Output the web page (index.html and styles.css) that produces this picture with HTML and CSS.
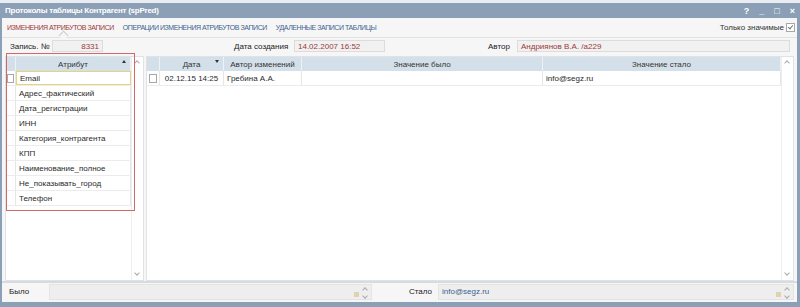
FILE: index.html
```html
<!DOCTYPE html>
<html>
<head>
  <meta charset="UTF-8">
  <title>Протоколы таблицы Контрагент</title>
  <link rel="stylesheet" href="styles.css">
</head>
<body>
  <div class="window">
    <div class="titlebar">
      <span class="title">Протоколы таблицы Контрагент (spPred)</span>
      <span class="controls"><span>?</span><span>_</span><span>&#9633;</span><span>&#215;</span></span>
    </div>
    <div class="tabs">
      <span class="tab active">Изменения атрибутов записи</span>
      <span class="tab">Операции изменения атрибутов записи</span>
      <span class="tab">Удаленные записи таблицы</span>
      <label class="only">Только значимые <span class="check on"></span></label>
    </div>
    <div class="fields">
      <span class="lbl l1">Запись. №</span>
      <span class="box num">8331</span>
      <span class="lbl l2">Дата создания</span>
      <span class="box date">14.02.2007 16:52</span>
      <span class="lbl l3">Автор</span>
      <span class="box author">Андриянов В.А. /a229</span>
    </div>
    <div class="main">
      <div class="panel left">
        <div class="grid">
          <div class="row head">
            <div class="c chk"></div>
            <div class="c attr">Атрибут<span class="sort"></span></div>
          </div>
          <div class="row sel"><div class="c chk"><span class="check"></span></div><div class="c attr">Email</div></div>
          <div class="row"><div class="c chk"></div><div class="c attr">Адрес_фактический</div></div>
          <div class="row"><div class="c chk"></div><div class="c attr">Дата_регистрации</div></div>
          <div class="row"><div class="c chk"></div><div class="c attr">ИНН</div></div>
          <div class="row"><div class="c chk"></div><div class="c attr">Категория_контрагента</div></div>
          <div class="row"><div class="c chk"></div><div class="c attr">КПП</div></div>
          <div class="row"><div class="c chk"></div><div class="c attr">Наименование_полное</div></div>
          <div class="row"><div class="c chk"></div><div class="c attr">Не_показывать_город</div></div>
          <div class="row"><div class="c chk"></div><div class="c attr">Телефон</div></div>
        </div>
        <div class="scroll"><span class="up"></span><span class="down"></span></div>
        <div class="mark"></div>
      </div>
      <div class="panel right">
        <div class="grid">
          <div class="row head">
            <div class="c chk2"></div>
            <div class="c date">Дата<span class="sort"></span></div>
            <div class="c who">Автор изменений</div>
            <div class="c was">Значение было</div>
            <div class="c now">Значение стало</div>
          </div>
          <div class="row">
            <div class="c chk2"><span class="check"></span></div>
            <div class="c date">02.12.15 14:25</div>
            <div class="c who al">Гребина А.А.</div>
            <div class="c was"></div>
            <div class="c now al">info@segz.ru</div>
          </div>
        </div>
        <div class="scroll"><span class="up"></span><span class="down"></span></div>
      </div>
    </div>
    <div class="bottom">
      <span class="blbl b1">Было</span>
      <div class="area a1"><span class="grip"></span><span class="arrows"><i class="up"></i><i class="down"></i></span></div>
      <span class="blbl b2">Стало</span>
      <div class="area a2"><span class="val">info@segz.ru</span><span class="grip"></span><span class="arrows"><i class="up"></i><i class="down"></i></span></div>
    </div>
  </div>
</body>
</html>
```

FILE: styles.css
```css
html, body { margin: 0; height: 307px; overflow: hidden; }
body { background: #e9edf1; font-family: "Liberation Sans", Arial, sans-serif; font-size: 8px; color: #2a2a2a; padding-top: 3px; box-sizing: border-box; }

.window { height: 304px; background: #8b9fb6; padding: 0 3px 5px 2px; box-sizing: border-box; display: flex; flex-direction: column; }
.titlebar { height: 15px; display: flex; align-items: center; justify-content: space-between; color: #fff; padding-left: 3px; }
.title { font-weight: bold; font-size: 8px; letter-spacing: -0.25px; }
.controls { display: flex; gap: 10px; font-size: 9px; font-weight: bold; padding-right: 2px; }

.tabs, .fields, .main, .bottom { background: #f6f6f6; }
.tabs { height: 19px; display: flex; align-items: center; padding-left: 5px; position: relative; }
.tab { text-transform: uppercase; font-size: 7px; color: #3c5f8f; margin-right: 9px; letter-spacing: -0.45px; position: relative; }
.tab.active { color: #9c3b3b; }
.tab.active::after { content: ""; position: absolute; left: 50%; bottom: -8px; width: 6px; height: 6px; background: #f6f6f6; border-left: 1px solid #ccc; border-top: 1px solid #ccc; transform: rotate(45deg); }
.only { margin-left: auto; margin-right: 2px; display: flex; align-items: center; gap: 2px; color: #333; }

.check { display: inline-block; width: 7px; height: 7px; border: 1px solid #a7a7a7; background: #fff; position: relative; }
.check.on::after { content: ""; position: absolute; left: 2px; top: 0; width: 2px; height: 4px; border: solid #777; border-width: 0 1px 1px 0; transform: rotate(40deg); }

.fields { height: 16px; display: flex; align-items: center; border-top: 1px solid #e2e2e2; }
.lbl { color: #222; }
.l1 { margin-left: 8px; width: 42px; }
.l2 { margin-left: 131px; width: 60px; }
.l3 { margin-left: 103px; width: 29px; }
.box { height: 12px; line-height: 12px; background: #f1f1f1; border: 1px solid #dcdcdc; color: #9a3a3a; padding: 0 3px; box-sizing: border-box; }
.num { width: 51px; text-align: right; }
.date { width: 91px; }
.author { width: 273px; }

.main { flex: 1; display: flex; padding: 2px 3px 0 3px; border-bottom: 2px solid #d5dbe1; }
.panel { display: flex; background: #fff; border: 1px solid #dfe3e7; position: relative; }
.panel.left { width: 137px; margin-right: 2px; }
.panel.right { flex: 1; }
.grid { flex: 1; }
.row { display: flex; height: 15px; border-bottom: 1px solid #ececec; box-sizing: border-box; }
.row.head { height: 14px; background: #d4e0e9; border-bottom: none; }
.c { display: flex; align-items: center; padding: 0 3px; border-right: 1px solid #e6e6e6; box-sizing: border-box; position: relative; }
.head .c { justify-content: center; color: #333; border-right: 1px solid #eef2f5; }
.chk { width: 10px; padding: 0 1px; }
.attr { flex: 1; padding-left: 3px; }
.sel .attr { border: 1px solid #e8d37a; }
.chk2 { width: 13px; padding: 0 2px; }
.panel.right .date { width: 64px; justify-content: center; }
.who { width: 78px; }
.who.al, .now.al { justify-content: flex-start; }
.was { width: 241px; }
.now { flex: 1; }
.sort { position: absolute; right: 4px; top: 3px; width: 0; height: 0; border: 2px solid transparent; border-bottom: 3px solid #333; border-top: none; }
.panel.right .sort { border-bottom: none; border-top: 3px solid #333; }

.scroll { width: 11px; border-left: 1px solid #eeeeee; position: relative; }
.up, .down { position: absolute; left: 3px; width: 3px; height: 3px; border: solid #aaa; border-width: 1px 0 0 1px; }
.up { top: 4px; transform: rotate(45deg); }
.down { bottom: 5px; transform: rotate(225deg); }

.mark { position: absolute; left: 0; top: -4px; width: 127px; height: 156px; border: 1px solid #d06a6a; pointer-events: none; }

.bottom { height: 17px; display: flex; align-items: center; padding: 0 3px 2px 3px; }
.blbl { color: #222; }
.b1 { width: 40px; padding-left: 4px; }
.b2 { width: 32px; margin-left: 28px; text-align: right; padding-right: 6px; }
.area { height: 16px; background: #eeeeee; border: 1px solid #e4e4e4; box-sizing: border-box; position: relative; display: flex; align-items: center; }
.a1 { width: 323px; }
.a2 { flex: 1; }
.val { color: #3c5f8f; padding-left: 3px; }
.grip { position: absolute; right: 12px; bottom: 2px; width: 5px; height: 5px; background: radial-gradient(circle, #c9b46a 0.6px, transparent 0.8px) 0 0 / 2px 2px; }
.arrows { position: absolute; right: 2px; top: 0; bottom: 0; width: 7px; }
.arrows i { position: absolute; left: 1px; width: 3px; height: 3px; border: solid #aaa; border-width: 1px 0 0 1px; }
.arrows .up { top: 3px; transform: rotate(45deg); }
.arrows .down { top: 9px; transform: rotate(225deg); }
```
